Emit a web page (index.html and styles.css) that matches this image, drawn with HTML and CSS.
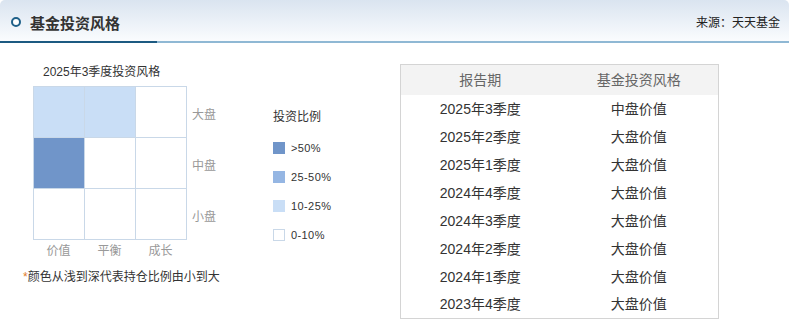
FILE: index.html
```html
<!DOCTYPE html>
<html lang="zh-CN">
<head>
<meta charset="utf-8">
<title>基金投资风格</title>
<link rel="stylesheet" href="styles.css">
</head>
<body>
<div class="panel">
  <div class="head">
    <div class="head-title"><span class="ring"></span><span>基金投资风格</span></div>
    <div class="head-source">来源：天天基金</div>
  </div>
  <div class="content">
    <div class="chart-col">
      <div class="chart-title">2025年3季度投资风格</div>
      <div class="chart-row">
        <div class="plot">
          <div class="matrix">
            <div class="cell light"></div><div class="cell light"></div><div class="cell"></div>
            <div class="cell dark"></div><div class="cell"></div><div class="cell"></div>
            <div class="cell"></div><div class="cell"></div><div class="cell"></div>
          </div>
          <div class="ylabels">
            <div class="ylabel">大盘</div>
            <div class="ylabel">中盘</div>
            <div class="ylabel">小盘</div>
          </div>
          <div class="xlabels">
            <div class="xlabel">价值</div>
            <div class="xlabel">平衡</div>
            <div class="xlabel">成长</div>
          </div>
        </div>
        <div class="legend">
          <div class="legend-title">投资比例</div>
          <div class="legend-item"><span class="sw sw-dark"></span><span>&gt;50%</span></div>
          <div class="legend-item"><span class="sw sw-mid"></span><span>25-50%</span></div>
          <div class="legend-item"><span class="sw sw-light"></span><span>10-25%</span></div>
          <div class="legend-item"><span class="sw sw-none"></span><span>0-10%</span></div>
        </div>
      </div>
      <div class="note"><span class="star">*</span>颜色从浅到深代表持仓比例由小到大</div>
    </div>
    <table class="style-table">
      <thead>
        <tr><th>报告期</th><th>基金投资风格</th></tr>
      </thead>
      <tbody>
        <tr><td>2025年3季度</td><td>中盘价值</td></tr>
        <tr><td>2025年2季度</td><td>大盘价值</td></tr>
        <tr><td>2025年1季度</td><td>大盘价值</td></tr>
        <tr><td>2024年4季度</td><td>大盘价值</td></tr>
        <tr><td>2024年3季度</td><td>大盘价值</td></tr>
        <tr><td>2024年2季度</td><td>大盘价值</td></tr>
        <tr><td>2024年1季度</td><td>大盘价值</td></tr>
        <tr><td>2023年4季度</td><td>大盘价值</td></tr>
      </tbody>
    </table>
  </div>
</div>
</body>
</html>
```
FILE: styles.css
```css
* { box-sizing: border-box; }
html, body { margin: 0; padding: 0; background: #fff; }
body {
  font-family: "Liberation Sans", "Noto Sans CJK SC", sans-serif;
  color: #333;
  font-size: 12px;
}
.panel { width: 789px; }
.head {
  height: 43px;
  display: flex;
  align-items: stretch;
  justify-content: space-between;
  background: linear-gradient(#dae4f0, #fafcfe);
  border-bottom: 2px solid #8fb8d4;
  border-radius: 5px 5px 0 0;
}
.head-title {
  width: 157px;
  display: flex;
  align-items: center;
  padding-left: 11px;
  padding-top: 3px;
  border-bottom: 2px solid #1c5a81;
  margin-bottom: -2px;
  font-size: 15px;
  font-weight: bold;
  color: #333;
}
.ring {
  width: 10px;
  height: 10px;
  border: 2px solid #1f6089;
  border-radius: 50%;
  margin-right: 9px;
  background: #fff;
}
.head-source {
  display: flex;
  align-items: center;
  padding-right: 9px;
  padding-top: 2px;
  font-size: 12px;
  color: #222;
}
.content {
  display: flex;
  align-items: flex-start;
}
.chart-col {
  width: 400px;
  padding-top: 22px;
}
.chart-title {
  margin-left: 43px;
  line-height: 14px;
  height: 14px;
  color: #333;
}
.chart-row {
  display: flex;
  align-items: flex-start;
  margin-top: 7px;
  margin-left: 33px;
}
.plot {
  display: grid;
  grid-template-columns: 154px auto;
}
.matrix {
  display: grid;
  grid-template-columns: repeat(3, 50px);
  grid-template-rows: repeat(3, 50px);
  gap: 1px;
  padding: 1px;
  background: #c9d8e8;
  width: 154px;
  height: 154px;
}
.cell { background: #fff; }
.cell.light { background: #c9def6; }
.cell.dark { background: #7095c9; }
.ylabels {
  display: flex;
  flex-direction: column;
  padding-left: 5px;
}
.ylabel {
  height: 51px;
  display: flex;
  align-items: center;
  padding-top: 7px;
  color: #999;
  line-height: 14px;
}
.xlabels {
  display: flex;
  margin-top: 4px;
}
.xlabel {
  width: 51px;
  text-align: center;
  line-height: 14px;
  color: #999;
}
.legend {
  margin-left: 57px;
  padding-top: 24px;
}
.legend-title {
  line-height: 14px;
  height: 14px;
  margin-bottom: 18px;
}
.legend-item {
  display: flex;
  align-items: center;
  height: 12px;
  margin-bottom: 17px;
  line-height: 12px;
  font-size: 11px;
  letter-spacing: 0.4px;
}
.sw {
  width: 12px;
  height: 12px;
  margin-right: 6px;
  flex: none;
}
.sw-dark { background: #7095c9; }
.sw-mid { background: #95b6e3; }
.sw-light { background: #c9def6; }
.sw-none { background: #fff; border: 1px solid #c9d8e8; }
.note {
  margin-top: 11px;
  margin-left: 23px;
  line-height: 16px;
  color: #333;
}
.star { color: #e07b2a; }
.style-table {
  width: 319px;
  border-collapse: collapse;
  border: 1px solid #d4d4d4;
  margin-top: 21px;
  font-size: 14px;
  table-layout: fixed;
}
.style-table th {
  background: #f3f3f3;
  height: 30px;
  font-weight: normal;
  color: #666;
  text-align: center;
  padding: 0;
  line-height: 16px;
}
.style-table td {
  height: 28px;
  text-align: center;
  padding: 0;
  color: #333;
  line-height: 16px;
}
```
